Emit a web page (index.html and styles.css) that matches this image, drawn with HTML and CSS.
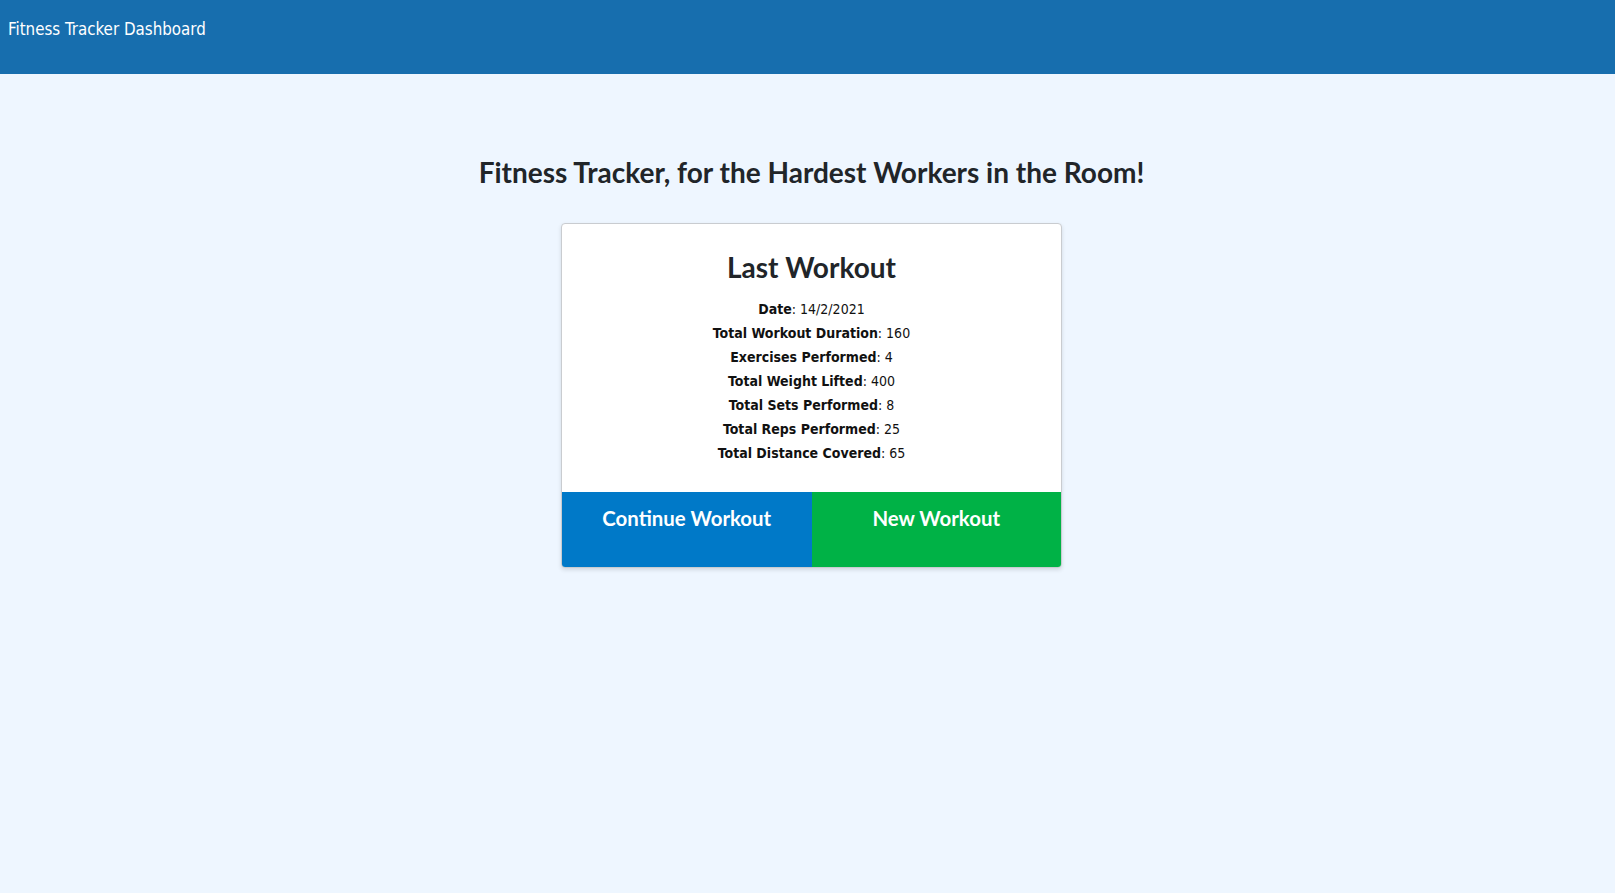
FILE: index.html
```html
<!DOCTYPE html>
<html lang="en">
<head>
<meta charset="utf-8">
<title>Fitness Tracker Dashboard</title>
<link rel="stylesheet" href="styles.css">
</head>
<body>
<header class="topbar">
  <span class="brand">Fitness Tracker Dashboard</span>
</header>
<main class="main">
  <h2 class="headline">Fitness Tracker, for the Hardest Workers in the Room!</h2>
  <section class="card">
    <div class="card-body">
      <h3 class="card-title">Last Workout</h3>
      <ul class="stats">
        <li><strong>Date</strong>: 14/2/2021</li>
        <li><strong>Total Workout Duration</strong>: 160</li>
        <li><strong>Exercises Performed</strong>: 4</li>
        <li><strong>Total Weight Lifted</strong>: 400</li>
        <li><strong>Total Sets Performed</strong>: 8</li>
        <li><strong>Total Reps Performed</strong>: 25</li>
        <li><strong>Total Distance Covered</strong>: 65</li>
      </ul>
    </div>
    <div class="actions">
      <a class="btn btn-continue" href="#">Continue Workout</a>
      <a class="btn btn-new" href="#">New Workout</a>
    </div>
  </section>
</main>
</body>
</html>
```

FILE: styles.css
```css
* { box-sizing: border-box; }
html, body { margin: 0; padding: 0; }
body {
  background: #eef6ff;
  font-family: "DejaVu Sans", Verdana, sans-serif;
  color: #212529;
  min-height: 893px;
}
.topbar {
  background: #176eae;
  height: 74px;
  padding: 19px 8px 0;
}
.brand {
  color: #fff;
  font-family: "DejaVu Sans Condensed", "DejaVu Sans", sans-serif;
  font-size: 16.8px;
}
.main {
  display: flex;
  flex-direction: column;
  align-items: center;
  padding: 78px 0 0 8px;
}
.headline {
  margin: 0;
  font-family: Lato, sans-serif;
  font-weight: 700;
  font-size: 28px;
  line-height: 40px;
  color: #212529;
}
.card {
  margin-top: 31px;
  width: 501px;
  background: #fff;
  border: 1px solid #c9ccd0;
  border-radius: 4px;
  box-shadow: 0 2px 4px rgba(0,0,0,0.12);
  overflow: hidden;
}
.card-body {
  padding: 23px 16px 27px;
  text-align: center;
}
.card-title {
  margin: 0 0 10px;
  font-family: Lato, sans-serif;
  font-weight: 700;
  font-size: 28px;
  line-height: 40px;
}
.stats {
  list-style: none;
  margin: 0;
  padding: 0;
  font-family: "DejaVu Sans Condensed", "DejaVu Sans", sans-serif;
  font-size: 14px;
  line-height: 24px;
  color: #111;
}
.stats strong { font-weight: 700; }
.actions {
  display: flex;
}
.btn {
  flex: 1;
  height: 75px;
  padding-top: 12px;
  text-align: center;
  color: #fff;
  text-decoration: none;
  font-family: Lato, sans-serif;
  font-weight: 700;
  font-size: 20.4px;
  line-height: 28px;
}
.btn-continue { background: #0079c8; }
.btn-new { background: #00b246; }
```
